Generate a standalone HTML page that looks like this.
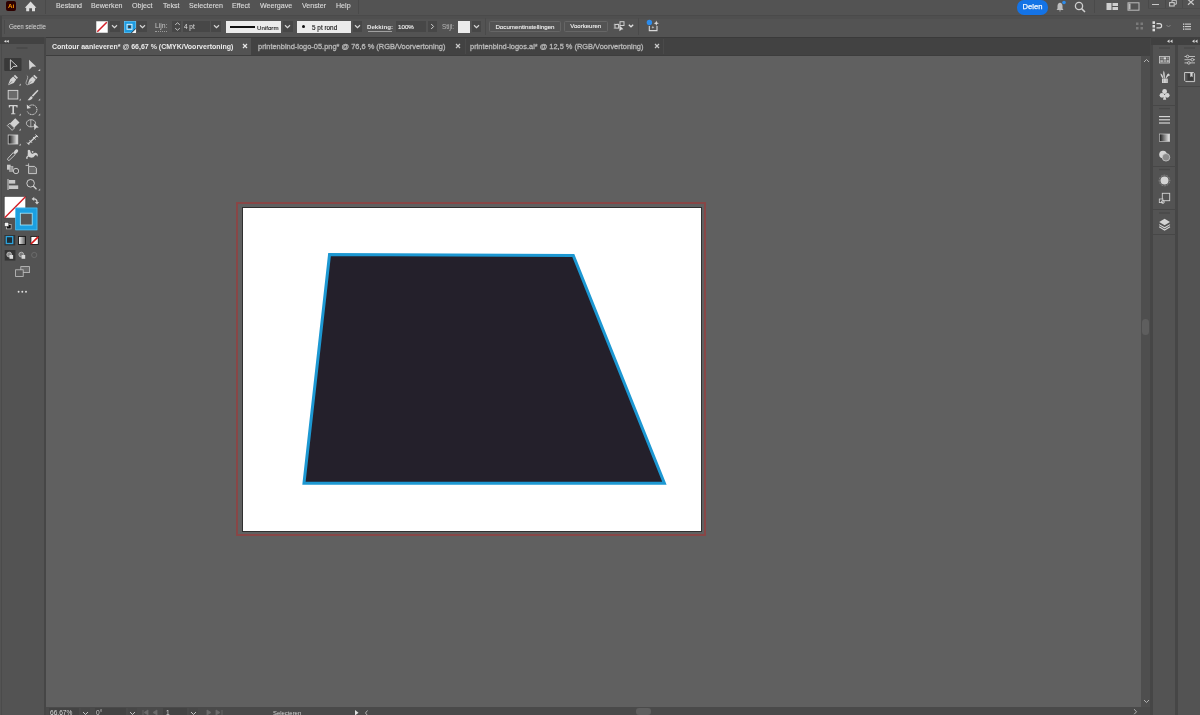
<!DOCTYPE html>
<html><head><meta charset="utf-8">
<style>
*{margin:0;padding:0;box-sizing:border-box}
html,body{width:1200px;height:715px;overflow:hidden;background:#606060;font-family:"Liberation Sans",sans-serif;color:#d6d6d6}
.a{position:absolute}
#menu{left:0;top:0;width:1200px;height:15px;background:#535353}
#menusep{left:0;top:15px;width:1200px;height:1px;background:#4a4a4a}
#ctrl{left:0;top:16px;width:1200px;height:21px;background:#535353}
#tabs{left:46px;top:37px;width:1106px;height:19px;background:#424242}
#lp{left:0;top:37px;width:44px;height:678px;background:#535353}
#lphead{left:0;top:37px;width:44px;height:7px;background:#424242}
#lpline{left:44px;top:37px;width:2px;height:678px;background:#464646}
#vs{left:1141px;top:56px;width:9px;height:651px;background:#4e4e4e}
#status{left:46px;top:707px;width:1105px;height:8px;background:#4a4a4a}
#rp{left:1150px;top:37px;width:50px;height:678px;background:#464646}
.mi{will-change:transform;top:0.8px;font-size:7.1px;line-height:10px;color:#dadada;-webkit-text-stroke:0.12px #dadada;white-space:nowrap}
.t{white-space:nowrap;will-change:transform}
</style></head><body>
<div class="a" id="menu"></div>
<div class="a" id="menusep"></div>
<div class="a" id="ctrl"></div>
<div class="a" style="left:0;top:16px;width:1200px;height:3px;background:#4f4f4f"></div>
<div class="a" id="lp"></div>
<div class="a" id="lphead"></div>
<div class="a" id="lpline"></div>
<div class="a" id="tabs"></div>
<div class="a" id="vs"></div>
<div class="a" id="status"></div>
<div class="a" id="rp"></div>

<!-- menu items -->
<div class="a mi" style="left:56px">Bestand</div>
<div class="a mi" style="left:91px">Bewerken</div>
<div class="a mi" style="left:132px">Object</div>
<div class="a mi" style="left:163px">Tekst</div>
<div class="a mi" style="left:189px">Selecteren</div>
<div class="a mi" style="left:232px">Effect</div>
<div class="a mi" style="left:260px">Weergave</div>
<div class="a mi" style="left:302px">Venster</div>
<div class="a mi" style="left:336px">Help</div>


<!-- menu bar details -->
<div class="a" style="left:6px;top:1px;width:10px;height:9.5px;background:#2e0100;border-radius:2px"></div>
<div class="a t" style="left:8px;top:2.2px;font-size:6.2px;line-height:7px;font-weight:bold;color:#ff9a00">Ai</div>
<svg class="a" style="left:24px;top:1px" width="13" height="11" viewBox="0 0 13 11"><path d="M6.6 0.6 L12.4 6.8 L11 6.8 L11 10.2 L8 10.2 L8 7.3 L5.2 7.3 L5.2 10.2 L2.2 10.2 L2.2 6.8 L0.8 6.8 Z" fill="#dcdcdc"/></svg>
<div class="a" style="left:45px;top:0;width:1px;height:14px;background:#4a4a4a"></div>
<div class="a" style="left:358px;top:0;width:1px;height:14px;background:#4a4a4a"></div>
<!-- Delen -->
<div class="a t" style="left:1017px;top:0;width:31px;height:14.5px;border-radius:7px;background:#1473e6;color:#f4f8ff;font-size:7.6px;line-height:14px;text-align:center;-webkit-text-stroke:0.25px #f4f8ff">Delen</div>
<svg class="a" style="left:1054px;top:0" width="14" height="14" viewBox="0 0 14 14"><path d="M2.5 10 L3.5 8.5 L3.5 6 C3.5 4 4.5 3 6 2.8 C7.5 3 8.5 4 8.5 6 L8.5 8.5 L9.5 10 Z M5 10.6 L7 10.6 L6 11.8 Z" fill="#bdbdbd"/><circle cx="10" cy="2.5" r="1.8" fill="#2d8ceb"/></svg>
<svg class="a" style="left:1074px;top:1px" width="13" height="13" viewBox="0 0 13 13"><circle cx="5" cy="5" r="3.6" fill="none" stroke="#cfcfcf" stroke-width="1.3"/><path d="M7.6 7.6 L11 11" stroke="#cfcfcf" stroke-width="1.5"/></svg>
<div class="a" style="left:1094px;top:0;width:1px;height:13px;background:#4a4a4a"></div>
<svg class="a" style="left:1106px;top:2px" width="13" height="9" viewBox="0 0 13 9"><rect x="0.5" y="1" width="5" height="7" fill="#cfcfcf"/><rect x="6.5" y="1" width="5.5" height="3" fill="#cfcfcf"/><rect x="6.5" y="5" width="5.5" height="3" fill="#cfcfcf"/></svg>
<svg class="a" style="left:1127px;top:2px" width="13" height="9" viewBox="0 0 13 9"><rect x="1" y="0.8" width="11" height="7.4" fill="none" stroke="#bdbdbd" stroke-width="1"/><rect x="1.5" y="1.5" width="2" height="6" fill="#bdbdbd"/></svg>
<div class="a" style="left:1148px;top:0;width:1px;height:8px;background:#4a4a4a"></div>
<div class="a" style="left:1148px;top:8px;width:52px;height:1px;background:#4d4d4d"></div>
<div class="a" style="left:1165px;top:0;width:1px;height:8px;background:#4a4a4a"></div>
<div class="a" style="left:1182px;top:0;width:1px;height:8px;background:#4a4a4a"></div>
<div class="a" style="left:1152px;top:4px;width:7px;height:1.2px;background:#c8c8c8"></div>
<svg class="a" style="left:1168px;top:0" width="10" height="8" viewBox="0 0 10 8"><rect x="1.6" y="2.6" width="4.6" height="3.4" fill="none" stroke="#c8c8c8" stroke-width="1.1"/><path d="M4 2.2 L4 0.3 L8.3 0.3 L8.3 4.2 L6.6 4.2" fill="none" stroke="#c8c8c8" stroke-width="1"/></svg>
<svg class="a" style="left:1187px;top:0" width="8" height="7" viewBox="0 0 8 7"><path d="M1 -0.5 L6.8 4.8 M6.8 -0.5 L1 4.8" stroke="#c8c8c8" stroke-width="1.2"/></svg>

<!-- control bar -->
<div class="a" style="left:0;top:16px;width:1.5px;height:21px;background:#454545"></div>
<div class="a" style="left:4px;top:20px;width:1px;height:14px;background:#4a4a4a"></div>
<div class="a t" style="left:9px;top:23.4px;font-size:6.7px;line-height:8px;color:#dcdcdc;transform:scaleX(0.9);transform-origin:0 0">Geen selectie</div>
<!-- fill swatch -->
<svg class="a" style="left:96px;top:20.5px" width="12" height="12" viewBox="0 0 12 12"><rect x="0" y="0" width="12" height="12" fill="#fff" stroke="#6a6a6a" stroke-width="0.6"/><path d="M1.3 10.8 L10.8 1.2" stroke="#d42028" stroke-width="1.5"/></svg>
<div class="a" style="left:109.5px;top:21px;width:10px;height:11px;background:#474747"></div>
<svg class="a" style="left:111px;top:24px" width="7" height="5" viewBox="0 0 7 5"><path d="M1 1.2 L3.5 3.6 L6 1.2" fill="none" stroke="#d6d6d6" stroke-width="1.25"/></svg>
<!-- stroke swatch -->
<svg class="a" style="left:124px;top:20.5px" width="12" height="12" viewBox="0 0 12 12"><rect x="0" y="0" width="12" height="12" fill="#1d9be0"/><rect x="0.3" y="0.3" width="11.4" height="11.4" fill="none" stroke="#6fc3ef" stroke-width="0.6"/><rect x="3" y="3.3" width="5" height="5" fill="none" stroke="#eaf6fb" stroke-width="0.9"/><rect x="4.2" y="4.5" width="2.6" height="2.6" fill="#3b3b3b"/><path d="M7.5 12 L12 7.5 L12 12 Z" fill="#f2f2f2"/><path d="M7.3 12 L12 7.3" stroke="#1a1a1a" stroke-width="0.8"/></svg>
<div class="a" style="left:137px;top:21px;width:10px;height:11px;background:#474747"></div>
<svg class="a" style="left:138.5px;top:24px" width="7" height="5" viewBox="0 0 7 5"><path d="M1 1.2 L3.5 3.6 L6 1.2" fill="none" stroke="#d6d6d6" stroke-width="1.25"/></svg>
<!-- Lijn -->
<div class="a t" style="left:154.7px;top:22.3px;font-size:6.85px;line-height:8px;color:#c4c4c4">Lijn:</div>
<div class="a" style="left:155px;top:31px;width:12px;height:0;border-top:0.6px dotted #9a9a9a"></div>
<div class="a" style="left:172.3px;top:21px;width:9px;height:11px;background:#474747"></div>
<svg class="a" style="left:173.5px;top:22px" width="7" height="9" viewBox="0 0 7 9"><path d="M1.2 2.8 L3.5 0.8 L5.8 2.8 M1.2 6.2 L3.5 8.2 L5.8 6.2" fill="none" stroke="#d0d0d0" stroke-width="0.9"/></svg>
<div class="a" style="left:182.7px;top:21px;width:27.5px;height:11px;background:#474747"></div>
<div class="a t" style="left:184px;top:22.5px;font-size:6.4px;line-height:8px;color:#e0e0e0">4 pt</div>
<div class="a" style="left:211px;top:21px;width:9.7px;height:11px;background:#474747"></div>
<svg class="a" style="left:212.5px;top:24px" width="7" height="5" viewBox="0 0 7 5"><path d="M1 1.2 L3.5 3.6 L6 1.2" fill="none" stroke="#d6d6d6" stroke-width="1.25"/></svg>
<!-- stroke profile -->
<div class="a" style="left:226px;top:20.7px;width:55.3px;height:12px;background:#ebebeb"></div>
<div class="a" style="left:230px;top:26.2px;width:24.5px;height:1.5px;background:#101010"></div>
<div class="a t" style="left:257.3px;top:23.8px;font-size:6.15px;line-height:8px;color:#1a1a1a;-webkit-text-stroke:0.1px #1a1a1a">Uniform</div>
<div class="a" style="left:282.7px;top:21px;width:10px;height:11px;background:#474747"></div>
<svg class="a" style="left:284px;top:24px" width="7" height="5" viewBox="0 0 7 5"><path d="M1 1.2 L3.5 3.6 L6 1.2" fill="none" stroke="#d6d6d6" stroke-width="1.25"/></svg>
<div class="a" style="left:297px;top:20.7px;width:54.3px;height:12px;background:#ebebeb"></div>
<div class="a" style="left:301.8px;top:25.3px;width:3px;height:3px;border-radius:50%;background:#101010"></div>
<div class="a t" style="left:312px;top:23.7px;font-size:6.4px;line-height:8px;color:#151515;-webkit-text-stroke:0.12px #151515">5 pt rond</div>
<div class="a" style="left:352.7px;top:21px;width:9.5px;height:11px;background:#474747"></div>
<svg class="a" style="left:354px;top:24px" width="7" height="5" viewBox="0 0 7 5"><path d="M1 1.2 L3.5 3.6 L6 1.2" fill="none" stroke="#d6d6d6" stroke-width="1.25"/></svg>
<!-- Dekking -->
<div class="a t" style="left:367.3px;top:23.1px;font-size:6.17px;line-height:8px;color:#e4e4e4;font-weight:bold">Dekking:</div>
<div class="a" style="left:367.5px;top:30.8px;width:24px;height:0.7px;background:#a0a0a0"></div>
<div class="a" style="left:396px;top:21px;width:30px;height:11px;background:#474747"></div>
<div class="a t" style="left:398px;top:23.2px;font-size:6.2px;line-height:8px;color:#ececec;-webkit-text-stroke:0.15px #ececec">100%</div>
<div class="a" style="left:428px;top:21px;width:9.3px;height:11px;background:#474747"></div>
<svg class="a" style="left:430px;top:23px" width="5" height="7" viewBox="0 0 5 7"><path d="M1.2 1 L3.6 3.5 L1.2 6" fill="none" stroke="#d0d0d0" stroke-width="1"/></svg>
<div class="a t" style="left:442px;top:23px;font-size:6.35px;line-height:8px;color:#b8b8b8">Stijl:</div>
<div class="a" style="left:458px;top:20.7px;width:12px;height:12px;background:#ebebeb"></div>
<div class="a" style="left:472px;top:21px;width:8.7px;height:11px;background:#474747"></div>
<svg class="a" style="left:473px;top:24px" width="7" height="5" viewBox="0 0 7 5"><path d="M1 1.2 L3.5 3.6 L6 1.2" fill="none" stroke="#d6d6d6" stroke-width="1.25"/></svg>
<div class="a" style="left:484.5px;top:18px;width:1px;height:17px;background:#4a4a4a"></div>
<div class="a t" style="left:489px;top:20.7px;width:72px;height:11.3px;border:1px solid #666;border-radius:1.5px;font-size:6.19px;line-height:9.5px;text-align:center;color:#f0f0f0;-webkit-text-stroke:0.12px #f0f0f0">Documentinstellingen</div>
<div class="a t" style="left:564px;top:20.7px;width:43.5px;height:11.3px;border:1px solid #666;border-radius:1.5px;font-size:6.04px;line-height:9.5px;text-align:center;color:#f0f0f0;-webkit-text-stroke:0.12px #f0f0f0">Voorkeuren</div>
<svg class="a" style="left:612px;top:19px" width="24" height="14" viewBox="612 19 24 14"><rect x="615" y="24.5" width="3.6" height="3.6" fill="none" stroke="#cfcfcf" stroke-width="1"/><rect x="620" y="21.7" width="4" height="3.8" fill="none" stroke="#cfcfcf" stroke-width="1"/><path d="M614.2 24 L614.2 29 M614.2 24 L619 24" stroke="#cfcfcf" stroke-width="0.5" stroke-dasharray="0.8 0.6"/><path d="M619.3 25.3 L623.4 29.3 L621.5 29.4 L619.5 31.2 Z" fill="#dadada"/><path d="M628.8 24.8 L631 26.8 L633.2 24.8" fill="none" stroke="#e0e0e0" stroke-width="1.3"/></svg>
<div class="a" style="left:638px;top:18px;width:1px;height:17px;background:#4a4a4a"></div>
<svg class="a" style="left:642px;top:18px" width="20" height="15" viewBox="642 18 20 15"><path d="M649.3 26 L649.3 30.6 L657 30.6 L657 26" fill="none" stroke="#d8d8d8" stroke-width="1.1"/><path d="M652.9 25.8 L653.4 26.9 L654.5 27.2 L653.4 27.6 L652.9 28.7 L652.4 27.6 L651.3 27.2 L652.4 26.9 Z" fill="#d8d8d8"/><path d="M656.3 20.6 L657 22.5 L658.9 23.2 L657 23.9 L656.3 25.8 L655.6 23.9 L653.7 23.2 L655.6 22.5 Z" fill="#d8d8d8"/><circle cx="649.4" cy="22.5" r="2.7" fill="#2b8ced"/></svg>
<!-- right control icons -->
<svg class="a" style="left:1135px;top:21px" width="10" height="11" viewBox="0 0 10 11"><rect x="1" y="1.5" width="2.5" height="2.5" fill="#7a7a7a"/><rect x="5.5" y="1.5" width="2.5" height="2.5" fill="#7a7a7a"/><rect x="1" y="6" width="2.5" height="2.5" fill="#7a7a7a"/><rect x="5.5" y="6" width="2.5" height="2.5" fill="#7a7a7a"/></svg>
<svg class="a" style="left:1151px;top:21px" width="22" height="11" viewBox="0 0 22 11"><rect x="1.5" y="0.3" width="2.5" height="2.6" fill="#dadada"/><rect x="1.5" y="4" width="2.5" height="2.6" fill="#dadada"/><rect x="1.5" y="7.7" width="2.5" height="2.6" fill="#dadada"/><path d="M5.5 2.6 L8.6 2.6 C10.2 2.6 10.6 3.6 10.6 4.7 C10.6 5.8 10.2 6.8 8.6 6.8 L5.5 6.8" fill="none" stroke="#dadada" stroke-width="1.2"/><path d="M15.5 4 L17.5 6 L19.5 4" fill="none" stroke="#8a8a8a" stroke-width="0.9"/></svg>
<svg class="a" style="left:1182px;top:23px" width="10" height="8" viewBox="0 0 10 8"><rect x="1" y="0.5" width="1.3" height="1.3" fill="#dadada"/><rect x="1" y="3" width="1.3" height="1.3" fill="#dadada"/><rect x="1" y="5.5" width="1.3" height="1.3" fill="#dadada"/><rect x="3" y="0.6" width="6" height="1" fill="#dadada"/><rect x="3" y="3.1" width="6" height="1" fill="#dadada"/><rect x="3" y="5.6" width="6" height="1" fill="#dadada"/></svg>


<!-- tabs -->
<div class="a" style="left:46px;top:37px;width:1106px;height:1px;background:#3a3a3a"></div>
<div class="a" style="left:46px;top:55px;width:1095px;height:1px;background:#3d3d3d"></div>
<div class="a" style="left:46px;top:38px;width:205px;height:17px;background:#535353"></div>
<div class="a t" style="left:52px;top:42.5px;font-size:7px;line-height:8px;font-weight:bold;color:#ececec">Contour aanleveren* @ 66,67 % (CMYK/Voorvertoning)</div>
<svg class="a" style="left:242px;top:43px" width="6" height="6" viewBox="0 0 6 6"><path d="M1 1 L5 5 M5 1 L1 5" stroke="#e8e8e8" stroke-width="1.2"/></svg>
<div class="a t" style="left:257.6px;top:43px;font-size:7.45px;line-height:8px;color:#b8b8b8;-webkit-text-stroke:0.3px #b8b8b8">printenbind-logo-05.png* @ 76,6 % (RGB/Voorvertoning)</div>
<svg class="a" style="left:455px;top:43px" width="6" height="6" viewBox="0 0 6 6"><path d="M1 1 L5 5 M5 1 L1 5" stroke="#c8c8c8" stroke-width="1.2"/></svg>
<div class="a" style="left:464.5px;top:39px;width:1px;height:15px;background:#4a4a4a"></div>
<div class="a t" style="left:470.2px;top:43px;font-size:7.43px;line-height:8px;color:#b8b8b8;-webkit-text-stroke:0.3px #b8b8b8">printenbind-logos.ai* @ 12,5 % (RGB/Voorvertoning)</div>
<svg class="a" style="left:653.5px;top:43px" width="6" height="6" viewBox="0 0 6 6"><path d="M1 1 L5 5 M5 1 L1 5" stroke="#c8c8c8" stroke-width="1.2"/></svg>
<div class="a" style="left:663px;top:39px;width:1px;height:15px;background:#4a4a4a"></div>


<!-- left toolbar -->
<div class="a" style="left:1px;top:44px;width:1px;height:671px;background:#4b4b4b"></div>
<svg class="a" style="left:0;top:37px" width="44" height="270" viewBox="0 37 44 270">
<path d="M6.3 39.9 L3.9 41.3 L6.3 42.7 Z M8.8 39.9 L6.4 41.3 L8.8 42.7 Z" fill="#e0e0e0"/>
<path d="M16.5 48 L27.5 48" stroke="#474747" stroke-width="1.4"/>
<rect x="4.2" y="58" width="17.3" height="13" rx="1" fill="#393939"/>
<!-- selection -->
<path d="M10.4 59.8 L17.2 66.2 L13.3 66.5 L10.4 69.6 Z" fill="none" stroke="#d2d2d2" stroke-width="0.95" stroke-linejoin="miter"/>
<!-- direct selection -->
<path d="M29 59.8 L36.2 66.5 L32.2 66.7 L29.3 69.8 Z" fill="#d2d2d2"/>
<path d="M40.2 68.8 L40.2 71 L38 71 Z" fill="#c0c0c0"/>
<!-- pen -->
<g fill="#d2d2d2">
<path d="M15 74.8 L18 77.8 L16.7 79 L13.8 76.1 Z"/>
<path d="M13.2 76.6 L16.2 79.6 L13.8 83 L8 85.2 L10.2 79.3 Z"/>
<path d="M34.3 74.8 L37.5 77.8 L36.2 79 L33.1 76.1 Z"/>
<path d="M32.5 76.6 L35.7 79.6 L33.3 83 L27.4 85.2 L29.6 79.3 Z"/>
</g>
<path d="M8.6 84.6 L12 81.2" stroke="#535353" stroke-width="0.6"/>
<path d="M28 84.6 L31.4 81.2" stroke="#535353" stroke-width="0.6"/>
<path d="M26.8 75.5 C28.5 76 27.5 79 26.5 81 C25.6 83 26 85 27.5 84.8" fill="none" stroke="#c6c6c6" stroke-width="0.7"/>
<path d="M20.8 83.6 L20.8 85.6 L18.8 85.6 Z" fill="#c0c0c0"/>
<!-- rectangle -->
<rect x="8.2" y="90.4" width="9.6" height="8.6" fill="#6a6a6a" stroke="#d2d2d2" stroke-width="0.95"/>
<path d="M20.8 98.6 L20.8 100.6 L18.8 100.6 Z" fill="#c0c0c0"/>
<!-- paintbrush -->
<path d="M37.5 89.8 L38.5 90.8 L33 96.8 L31.8 95.6 Z" fill="#d2d2d2"/>
<path d="M31.3 96 L32.7 97.4 C32.2 99.4 30.5 100.3 27.5 100.2 C28.8 99.4 29.6 97 31.3 96 Z" fill="#d2d2d2"/>
<path d="M40.2 98.6 L40.2 100.6 L38.2 100.6 Z" fill="#c0c0c0"/>
<!-- type -->
<path d="M8.8 105 L17.6 105 L17.6 107.6 L16.6 107.6 L16.2 106.2 L14 106.2 L14 113.2 L15.4 113.6 L15.4 114.2 L11 114.2 L11 113.6 L12.4 113.2 L12.4 106.2 L10.2 106.2 L9.8 107.6 L8.8 107.6 Z" fill="#d2d2d2"/>
<path d="M20.8 113.6 L20.8 115.6 L18.8 115.6 Z" fill="#c0c0c0"/>
<!-- rotate -->
<path d="M28.4 106.6 C30.5 104.3 34.5 104.3 36.2 107 C38 110 36.6 114 32.5 114.6 C30 114.8 28 113.2 27.3 111.5" fill="none" stroke="#d2d2d2" stroke-width="0.95" stroke-dasharray="1.6 0.6"/>
<path d="M26.8 104.5 L27 108.8 L31 108 Z" fill="#d2d2d2"/>
<path d="M40.2 113.6 L40.2 115.6 L38.2 115.6 Z" fill="#c0c0c0"/>
<!-- eraser -->
<g transform="rotate(-45 13.4 124.3)">
<rect x="8.6" y="121.3" width="10.4" height="6" fill="#d2d2d2"/>
<rect x="8.2" y="120.9" width="3.4" height="6.8" fill="#5a5a5a" stroke="#d2d2d2" stroke-width="0.8"/>
</g>
<path d="M20.8 128.6 L20.8 130.6 L18.8 130.6 Z" fill="#c0c0c0"/>
<!-- shape builder -->
<ellipse cx="31" cy="123.3" rx="4.6" ry="3.6" fill="none" stroke="#d2d2d2" stroke-width="0.8"/>
<path d="M30.8 119.8 L30.8 127" stroke="#d2d2d2" stroke-width="0.7"/>
<path d="M33.8 123.3 L38.8 127.6 L36.2 127.8 L34.4 130.2 Z" fill="#d2d2d2"/>
<!-- gradient -->
<defs><linearGradient id="gr" x1="0" x2="1" y1="0" y2="0"><stop offset="0" stop-color="#111"/><stop offset="1" stop-color="#eee"/></linearGradient>
<linearGradient id="gr2" x1="0" x2="1" y1="0" y2="0"><stop offset="0" stop-color="#333"/><stop offset="1" stop-color="#f0f0f0"/></linearGradient></defs>
<rect x="8.2" y="135" width="9.6" height="9" fill="url(#gr)" stroke="#cfcfcf" stroke-width="0.8"/>
<path d="M20.8 143.6 L20.8 145.6 L18.8 145.6 Z" fill="#c0c0c0"/>
<!-- width/mesh tool -->
<path d="M28 144 L37 135.5" stroke="#d2d2d2" stroke-width="1.4"/>
<path d="M29.5 140.2 L32 142.8 M33 137 L35.6 139.5 M35.5 134.5 L38.2 137.2 M27 142.5 L29.2 144.8" stroke="#d2d2d2" stroke-width="1"/>
<!-- eyedropper -->
<ellipse cx="16" cy="151.6" rx="2.6" ry="1.7" transform="rotate(-45 16 151.6)" fill="#d2d2d2"/>
<path d="M13.2 152.6 L15.2 154.6 L9.4 160.2 C8.7 160.6 8 160.4 7.7 159.9 C7.4 159.4 7.5 158.8 8 158.3 Z" fill="none" stroke="#d2d2d2" stroke-width="0.9"/>
<!-- puppet warp -->
<path d="M27.6 150.8 C28.2 149.6 29.6 149.6 30.2 150.6 C30.6 151.6 30.4 152.8 31.6 153.6 C32.6 154.2 33.8 153.2 35 152.8 C36.4 152.4 37.6 153.4 37.8 155 C37.9 156 37.4 156.6 37 156.6 C36.8 155.6 36.2 154.8 35.4 155.2 C34.4 155.8 34 157.2 32.6 157.6 C31 158 29.4 157.4 28.4 156.6 L27.2 157.6 L26.4 156.8 L27.8 155.6 C27.4 154.2 28.2 152.6 27.6 150.8 Z" fill="#d2d2d2"/>
<circle cx="32.6" cy="151.8" r="0.9" fill="#d2d2d2"/>
<circle cx="26.9" cy="157.9" r="0.9" fill="#d2d2d2"/>
<!-- blend -->
<rect x="7" y="164.7" width="3.6" height="5" fill="#c8c8c8"/>
<rect x="9.6" y="166.3" width="3.4" height="5" fill="#9a9a9a" stroke="#c8c8c8" stroke-width="0.5"/>
<circle cx="16" cy="171" r="2.7" fill="#535353" stroke="#d2d2d2" stroke-width="0.9"/>

<!-- artboard tool -->
<path d="M25.6 165.4 L28.6 165.4 M28.6 163.4 L28.6 166.4" stroke="#d2d2d2" stroke-width="0.8"/>
<path d="M28.6 166.4 L34.6 166.4 L36.4 168.2 L36.4 173.6 L28.6 173.6 Z" fill="#6a6a6a" stroke="#d2d2d2" stroke-width="0.9"/>
<!-- graph -->
<path d="M8 179 L8 190" stroke="#d2d2d2" stroke-width="1"/>
<rect x="8.8" y="180" width="6.4" height="3.6" fill="#c8c8c8"/>
<rect x="8.8" y="185.4" width="9.4" height="3.6" fill="#c8c8c8"/>
<!-- zoom -->
<circle cx="30.6" cy="183.3" r="3.8" fill="none" stroke="#d2d2d2" stroke-width="0.95"/>
<path d="M33.3 186 L36.5 189.2" stroke="#d2d2d2" stroke-width="1.3"/>
<path d="M40.2 188.6 L40.2 190.6 L38.2 190.6 Z" fill="#c0c0c0"/>
<!-- fill box -->
<rect x="4.2" y="196.3" width="21.6" height="21.8" fill="#fff" stroke="#2e2e2e" stroke-width="0.6"/>
<path d="M4.7 217.7 L25.5 196.7" stroke="#d01c24" stroke-width="1.4"/>
<!-- stroke box -->
<rect x="15.4" y="207.7" width="21.9" height="22.5" fill="#1b9fe0"/>
<rect x="15.7" y="208" width="21.3" height="21.9" fill="none" stroke="#60c6f3" stroke-width="0.6"/>
<rect x="20.3" y="213.2" width="11.9" height="11.8" fill="#555" stroke="#a8ecff" stroke-width="0.8"/>
<!-- swap -->
<path d="M31.6 198.9 L34.2 196.7 L34.2 201.1 Z" fill="#cfcfcf"/><path d="M33.8 198.9 C35.8 198.9 37 199.9 37 202.2" fill="none" stroke="#cfcfcf" stroke-width="1.3"/><path d="M34.9 202 L39.1 202 L37 204.4 Z" fill="#cfcfcf"/>
<!-- default -->
<rect x="6.5" y="224.5" width="4.6" height="4.4" fill="#111" stroke="#ddd" stroke-width="0.6"/>
<rect x="4.4" y="222.3" width="4.4" height="4.2" fill="#f2f2f2" stroke="#222" stroke-width="0.5"/>
<!-- color mode row -->
<rect x="4.5" y="235" width="10.7" height="10.4" fill="#333"/>
<rect x="6.3" y="236.6" width="6.4" height="6.9" fill="#1d2e36" stroke="#2ea3dc" stroke-width="1.3"/>
<defs><linearGradient id="gr3" x1="0" x2="1"><stop offset="0" stop-color="#fafafa"/><stop offset="1" stop-color="#555"/></linearGradient></defs>
<rect x="18.5" y="236.4" width="7" height="8.1" fill="url(#gr3)" stroke="#161616" stroke-width="0.9"/>
<rect x="30.9" y="236.4" width="7.4" height="8.1" fill="#fff" stroke="#161616" stroke-width="0.9"/>
<path d="M30.9 244 L38.2 236.8" stroke="#d81818" stroke-width="1.7"/>
<!-- draw mode row -->
<rect x="4.7" y="250" width="10.7" height="10.6" fill="#353535"/>
<circle cx="9.2" cy="254.6" r="2.4" fill="#8a8a8a" stroke="#d6d6d6" stroke-width="0.7"/>
<rect x="9.5" y="255" width="3.6" height="3.8" fill="#dcdcdc"/>
<circle cx="21.3" cy="254.6" r="2.4" fill="#7a7a7a" stroke="#d0d0d0" stroke-width="0.7"/>
<rect x="21.6" y="255" width="3.6" height="3.8" fill="#d8d8d8"/>
<circle cx="34.2" cy="255" r="2.6" fill="none" stroke="#707070" stroke-width="0.8"/>
<!-- screen mode -->
<rect x="20.8" y="266.6" width="8.6" height="6" fill="#6a6a6a" stroke="#c4c4c4" stroke-width="0.8"/>
<rect x="15.6" y="269.8" width="7.6" height="6.8" fill="#5a5a5a" stroke="#c4c4c4" stroke-width="0.8"/>
<!-- more -->
<circle cx="18.6" cy="291.8" r="0.95" fill="#e0e0e0"/><circle cx="22.3" cy="291.8" r="0.95" fill="#e0e0e0"/><circle cx="26" cy="291.8" r="0.95" fill="#e0e0e0"/>
</svg>


<!-- right panels -->
<div class="a" style="left:1151px;top:37px;width:49px;height:7.5px;background:#404040"></div>
<svg class="a" style="left:1166px;top:39px" width="8" height="5" viewBox="0 0 8 5"><path d="M3.5 0.5 L1 2.3 L3.5 4 Z M6.5 0.5 L4 2.3 L6.5 4 Z" fill="#d8d8d8"/></svg>
<svg class="a" style="left:1191px;top:39px" width="8" height="5" viewBox="0 0 8 5"><path d="M3.5 0.5 L1 2.3 L3.5 4 Z M6.5 0.5 L4 2.3 L6.5 4 Z" fill="#d8d8d8"/></svg>
<div class="a" style="left:1152.5px;top:44.5px;width:22.8px;height:670.5px;background:#535353"></div>
<div class="a" style="left:1177.8px;top:44.5px;width:22.2px;height:670.5px;background:#535353"></div>
<div class="a" style="left:1178px;top:86px;width:22px;height:1px;background:#474747"></div>
<div class="a" style="left:1152.5px;top:105px;width:23px;height:1px;background:#474747"></div>
<div class="a" style="left:1152.5px;top:165.5px;width:23px;height:1px;background:#474747"></div>
<div class="a" style="left:1152.5px;top:209.3px;width:23px;height:1px;background:#474747"></div>
<div class="a" style="left:1152.5px;top:234.4px;width:23px;height:1px;background:#474747"></div>
<svg class="a" style="left:1152px;top:44px" width="48" height="200" viewBox="1152 44 48 200">
<g stroke="#484848" stroke-width="1.3">
<path d="M1159 48 L1170 48"/><path d="M1184 48 L1195 48"/><path d="M1159 108.6 L1170 108.6"/><path d="M1159 169.5 L1170 169.5"/><path d="M1159 213 L1170 213"/>
</g>
<g fill="#d4d4d4">
<!-- swatches -->
<rect x="1159.4" y="56.4" width="10.2" height="6.6" fill="none" stroke="#cfcfcf" stroke-width="0.8"/>
<rect x="1160.3" y="57.3" width="2.6" height="2.2" fill="#8a8a8a"/><rect x="1163.5" y="57.3" width="2.6" height="2.2" fill="#d8d8d8"/><rect x="1166.6" y="57.3" width="2.2" height="2.2" fill="#8a8a8a"/>
<rect x="1160.3" y="60.1" width="2.6" height="2.2" fill="#b0b0b0"/><rect x="1163.5" y="60.1" width="2.6" height="2.2" fill="#a0a0a0"/><rect x="1166.6" y="60.1" width="2.2" height="2.2" fill="#b8b8b8"/>
<!-- brushes -->
<rect x="1162" y="78.6" width="5.8" height="4.4" fill="#d4d4d4"/>
<path d="M1163.6 79.2 L1163.6 82.5 M1166.2 79.2 L1166.2 82.5" stroke="#8a8a8a" stroke-width="0.5"/>
<path d="M1162.8 78.6 C1161.8 77 1160.5 75.5 1160.5 73.5 C1162 74 1163 75.5 1163.4 78.6 Z" fill="#d4d4d4"/>
<path d="M1164 78.6 C1163.2 75.5 1162.8 73 1163.7 70.5 C1164.7 72.5 1165 75 1164.8 78.6 Z" fill="#d4d4d4"/>
<path d="M1165.5 78.6 C1166 76.5 1167 74.5 1168.2 73.6 C1169 74 1169.8 74.8 1170 75.6 C1168.5 75.8 1167 77 1166.3 78.6 Z" fill="#d4d4d4"/>
<!-- symbols club -->
<circle cx="1164.6" cy="91.5" r="2.4"/><circle cx="1162" cy="95.3" r="2.4"/><circle cx="1167.2" cy="95.3" r="2.4"/>
<path d="M1164 95 L1165.2 95 L1166.2 99.8 L1163 99.8 Z"/>
<!-- stroke -->
<rect x="1159" y="116" width="11" height="1.2"/><rect x="1159" y="119.2" width="11" height="1.2"/><rect x="1159" y="122.4" width="11" height="1.2"/>
</g>
<defs><linearGradient id="rg" x1="0" x2="1"><stop offset="0" stop-color="#151515"/><stop offset="1" stop-color="#f0f0f0"/></linearGradient></defs>
<rect x="1159.3" y="134" width="10.4" height="7.4" fill="url(#rg)" stroke="#d4d4d4" stroke-width="0.6"/>
<!-- transparency -->
<circle cx="1163" cy="154.6" r="3.8" fill="#d4d4d4"/>
<circle cx="1166" cy="157.3" r="3.8" fill="#8a8a8a" stroke="#d4d4d4" stroke-width="0.7"/>
<!-- appearance -->
<circle cx="1164.5" cy="180.5" r="4" fill="#d4d4d4"/>
<circle cx="1164.5" cy="180.5" r="5.3" fill="none" stroke="#bcbcbc" stroke-width="0.7" stroke-dasharray="0.8 0.8"/>
<!-- transform -->
<rect x="1162.3" y="193.3" width="7.4" height="7.4" fill="none" stroke="#d4d4d4" stroke-width="0.9"/>
<rect x="1159.3" y="199" width="3.6" height="3.6" fill="#535353" stroke="#d4d4d4" stroke-width="0.8"/>
<circle cx="1162.8" cy="202" r="1.5" fill="none" stroke="#d4d4d4" stroke-width="0.8"/>
<!-- layers -->
<path d="M1164.6 218.8 L1170 222 L1164.6 225.2 L1159.2 222 Z" fill="#d4d4d4"/>
<path d="M1159.2 224.6 L1164.6 227.8 L1170 224.6" fill="none" stroke="#d4d4d4" stroke-width="1.1"/>
<path d="M1159.2 226.8 L1164.6 230 L1170 226.8" fill="none" stroke="#d4d4d4" stroke-width="1.1"/>
<!-- properties -->
<g stroke="#d4d4d4" stroke-width="0.8" fill="#535353">
<path d="M1184.5 56.5 L1195 56.5 M1184.5 59.7 L1195 59.7 M1184.5 62.9 L1195 62.9" fill="none"/>
<circle cx="1187.6" cy="56.5" r="1.3"/><circle cx="1192.3" cy="59.7" r="1.3"/><circle cx="1188.8" cy="62.9" r="1.3"/>
</g>
<!-- libraries -->
<path d="M1184.6 72.5 L1193.4 72.5 L1194.6 73.7 L1194.6 81.6 L1185.8 81.6 L1184.6 80.4 Z" fill="none" stroke="#d4d4d4" stroke-width="0.9"/>
<rect x="1187.5" y="74" width="5.5" height="6.5" fill="#3a3a3a"/>
<path d="M1190.3 73 L1192.6 73 L1192.6 77.2 L1191.45 76.2 L1190.3 77.2 Z" fill="#d4d4d4"/>
</svg>
<!-- scrollbar -->
<svg class="a" style="left:1143px;top:58px" width="7" height="5" viewBox="0 0 7 5"><path d="M1 4 L3.5 1.5 L6 4" fill="none" stroke="#bdbdbd" stroke-width="0.9"/></svg>
<div class="a" style="left:1141.5px;top:319px;width:7.5px;height:16px;border-radius:3.5px;background:#5e5e5e"></div>
<svg class="a" style="left:1143px;top:699px" width="7" height="5" viewBox="0 0 7 5"><path d="M1 1 L3.5 3.5 L6 1" fill="none" stroke="#bdbdbd" stroke-width="0.9"/></svg>


<!-- status bar -->
<div class="a" style="left:49px;top:708px;width:30px;height:7px;background:#434343"></div>
<div class="a t" style="left:50.3px;top:709.4px;font-size:6.6px;line-height:8px;color:#dadada">66,67%</div>
<div class="a" style="left:80.8px;top:708px;width:9.2px;height:7px;background:#474747"></div>
<svg class="a" style="left:82px;top:711px" width="7" height="4" viewBox="0 0 7 4"><path d="M1 1 L3.5 3.5 L6 1" fill="none" stroke="#d0d0d0" stroke-width="0.9"/></svg>
<div class="a" style="left:95px;top:708px;width:30.8px;height:7px;background:#434343"></div>
<div class="a t" style="left:95.8px;top:709.4px;font-size:6.6px;line-height:8px;color:#cacaca">0°</div>
<div class="a" style="left:127.5px;top:708px;width:9.2px;height:7px;background:#474747"></div>
<svg class="a" style="left:128.6px;top:711px" width="7" height="4" viewBox="0 0 7 4"><path d="M1 1 L3.5 3.5 L6 1" fill="none" stroke="#d0d0d0" stroke-width="0.9"/></svg>
<svg class="a" style="left:141px;top:709px" width="20" height="6" viewBox="0 0 20 6"><path d="M2 1 L2 6 M7 1 L3.2 3.5 L7 6 Z M16 1 L12 3.5 L16 6 Z" fill="#6c6c6c" stroke="#6c6c6c" stroke-width="0.8"/></svg>
<div class="a" style="left:163.3px;top:708px;width:24.2px;height:7px;background:#434343"></div>
<div class="a t" style="left:166px;top:709.4px;font-size:6.6px;line-height:8px;color:#dadada">1</div>
<div class="a" style="left:189px;top:708px;width:9px;height:7px;background:#474747"></div>
<svg class="a" style="left:190px;top:711px" width="7" height="4" viewBox="0 0 7 4"><path d="M1 1 L3.5 3.5 L6 1" fill="none" stroke="#d0d0d0" stroke-width="0.9"/></svg>
<svg class="a" style="left:203px;top:709px" width="21" height="6" viewBox="0 0 21 6"><path d="M4 1 L8 3.5 L4 6 Z M13 1 L17 3.5 L13 6 Z M19 1 L19 6" fill="#6c6c6c" stroke="#6c6c6c" stroke-width="0.8"/></svg>
<div class="a t" style="left:272.5px;top:709.2px;font-size:5.9px;line-height:8px;color:#d4d4d4">Selecteren</div>
<svg class="a" style="left:353px;top:708.5px" width="18" height="7" viewBox="0 0 18 7"><path d="M2 1 L5.5 3.8 L2 6.6 Z" fill="#e0e0e0"/><path d="M14.5 1.5 L12.5 4 L14.5 6.5" fill="none" stroke="#bcbcbc" stroke-width="0.9"/></svg>
<div class="a" style="left:636px;top:708px;width:15px;height:7px;border-radius:3px;background:#5f5f5f"></div>
<svg class="a" style="left:1133px;top:708px" width="5" height="7" viewBox="0 0 5 7"><path d="M1.2 1.2 L3.5 3.8 L1.2 6.2" fill="none" stroke="#bdbdbd" stroke-width="0.9"/></svg>

<!-- artboard -->
<div class="a" style="left:236px;top:202px;width:470px;height:334px;border:2px solid #884646"></div>
<div class="a" style="left:242px;top:207px;width:460px;height:325px;border:1px solid #303030;background:#fff"></div>
<svg class="a" style="left:0;top:0" width="1200" height="715">
<polygon points="329.54,254.51 573.28,255.50 664.38,483.20 303.98,483.20" fill="#24202b" stroke="#1d98d2" stroke-width="3.0" stroke-linejoin="miter"/>
</svg>
</body></html>
